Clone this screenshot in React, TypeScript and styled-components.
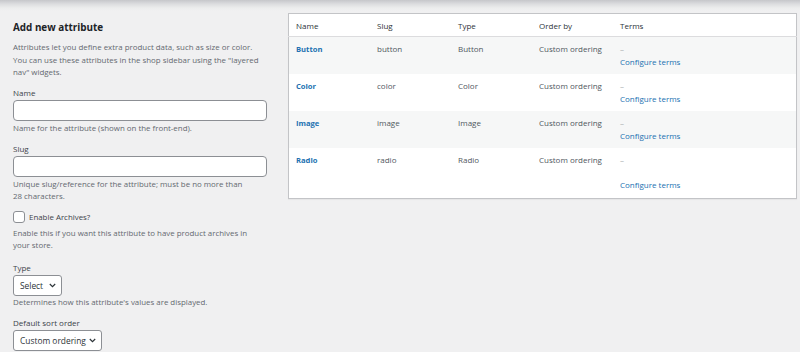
import React from "react";
import styled, { createGlobalStyle } from "styled-components";

const Global = createGlobalStyle`
  html, body { margin: 0; padding: 0; }
  body {
    background: linear-gradient(#c6c7ca 0px, #dcdddf 4px, #eceded 8px, #f0f0f1 11px) #f0f0f1;
    font-family: "Open Sans", "Noto Sans", sans-serif;
    font-size: 8px;
    color: #3c434a;
    width: 800px;
    height: 352px;
    overflow: hidden;
  }
`;

const Page = styled.div`
  display: flex;
  align-items: flex-start;
  gap: 21px;
  padding: 13px 3px 0 13px;
`;

const FormCol = styled.div`
  width: 254px;
  flex: none;
  display: flex;
  flex-direction: column;
`;

const Heading = styled.h2`
  margin: 8px 0 8px;
  font-size: 9.9px;
  font-weight: 700;
  color: #1d2327;
  line-height: 12px;
`;

const Help = styled.p<{ $lh?: number }>`
  margin: 0;
  color: #646970;
  line-height: ${(p) => p.$lh ?? 12}px;
  font-size: 7.9px;
  white-space: nowrap;
`;

const Field = styled.div<{ $gap: number }>`
  display: flex;
  flex-direction: column;
  margin-top: ${(p) => p.$gap}px;
`;

const Label = styled.label`
  color: #3c434a;
  line-height: 12px;
  font-size: 8px;
  font-weight: 400;
  margin-bottom: 1px;
`;

const TextInput = styled.input`
  box-sizing: border-box;
  width: 254px;
  height: 21px;
  border: 1px solid #8c8f94;
  border-radius: 4px;
  background: #fff;
  margin: 0 0 1px;
`;

const SelectBox = styled.div<{ $w: number }>`
  box-sizing: border-box;
  width: ${(p) => p.$w}px;
  height: 21px;
  border: 1px solid #8c8f94;
  border-radius: 3px;
  background: #fff;
  display: flex;
  align-items: center;
  justify-content: space-between;
  padding: 0 5px 0 6px;
  color: #2c3338;
  font-size: 8.4px;
`;

const CheckRow = styled.div`
  display: flex;
  align-items: center;
  gap: 4px;
  height: 12px;
  margin-top: 9px;
  margin-bottom: 4px;
  color: #3c434a;
  font-size: 7.9px;
`;

const Check = styled.span`
  box-sizing: border-box;
  width: 12px;
  height: 12px;
  border: 1px solid #8c8f94;
  border-radius: 3px;
  background: #fff;
`;

const Table = styled.table`
  width: 509px;
  flex: none;
  border-collapse: collapse;
  background: #fff;
  border: 1px solid #c3c4c7;
  box-shadow: 0 1px 1px rgba(0, 0, 0, 0.04);
  table-layout: fixed;
`;

const Th = styled.th<{ $w?: number }>`
  text-align: left;
  font-weight: 400;
  color: #2c3338;
  height: 22px;
  padding: 0 7px;
  border-bottom: 1px solid #dcdcde;
  font-size: 8px;
  width: ${(p) => (p.$w ? `${p.$w - 14}px` : "auto")};
`;

const Tr = styled.tr<{ $alt: boolean }>`
  background: ${(p) => (p.$alt ? "#f6f7f7" : "#fff")};
`;

const Td = styled.td`
  vertical-align: top;
  padding: 6px 7px 6px;
  line-height: 12.5px;
  color: #50575e;
  font-size: 8px;
`;

const NameLink = styled.a`
  color: #2271b1;
  font-weight: 700;
  font-size: 7.6px;
  text-decoration: none;
`;

const Dash = styled.div`
  color: #a7aaad;
  height: 12.5px;
`;

const TermsLink = styled.a<{ $low?: boolean }>`
  display: block;
  color: #2271b1;
  text-decoration: none;
  margin-top: ${(p) => (p.$low ? 12.5 : 0)}px;
`;

const Chevron = () => (
  <svg width="7" height="5" viewBox="0 0 7 5" fill="none">
    <path d="M0.8 1l2.7 2.6L6.2 1" stroke="#2c3338" strokeWidth="1.2" />
  </svg>
);

const rows = [
  { name: "Button", slug: "button" },
  { name: "Color", slug: "color" },
  { name: "Image", slug: "image" },
  { name: "Radio", slug: "radio" },
];

export default function App() {
  return (
    <>
      <Global />
      <Page>
        <FormCol>
          <Heading>Add new attribute</Heading>
          <Help $lh={12.5}>
            Attributes let you define extra product data, such as size or color.
            <br />
            You can use these attributes in the shop sidebar using the "layered
            <br />
            nav" widgets.
          </Help>
          <Field $gap={8}>
            <Label>Name</Label>
            <TextInput />
            <Help>Name for the attribute (shown on the front-end).</Help>
          </Field>
          <Field $gap={9}>
            <Label>Slug</Label>
            <TextInput />
            <Help>
              Unique slug/reference for the attribute; must be no more than
              <br />
              28 characters.
            </Help>
          </Field>
          <CheckRow>
            <Check />
            <span>Enable Archives?</span>
          </CheckRow>
          <Help $lh={12.5}>
            Enable this if you want this attribute to have product archives in
            <br />
            your store.
          </Help>
          <Field $gap={10}>
            <Label>Type</Label>
            <SelectBox $w={49}>
              Select <Chevron />
            </SelectBox>
            <Help>Determines how this attribute's values are displayed.</Help>
          </Field>
          <Field $gap={9}>
            <Label>Default sort order</Label>
            <SelectBox $w={89}>
              Custom ordering <Chevron />
            </SelectBox>
          </Field>
        </FormCol>
        <Table>
          <thead>
            <tr>
              <Th $w={81}>Name</Th>
              <Th $w={81}>Slug</Th>
              <Th $w={81}>Type</Th>
              <Th $w={81}>Order by</Th>
              <Th>Terms</Th>
            </tr>
          </thead>
          <tbody>
            {rows.map((r, i) => (
              <Tr key={r.name} $alt={i % 2 === 0}>
                <Td>
                  <NameLink href="#">{r.name}</NameLink>
                </Td>
                <Td>{r.slug}</Td>
                <Td>{r.name}</Td>
                <Td>Custom ordering</Td>
                <Td>
                  <Dash>–</Dash>
                  <TermsLink href="#" $low={i === rows.length - 1}>
                    Configure terms
                  </TermsLink>
                </Td>
              </Tr>
            ))}
          </tbody>
        </Table>
      </Page>
    </>
  );
}
